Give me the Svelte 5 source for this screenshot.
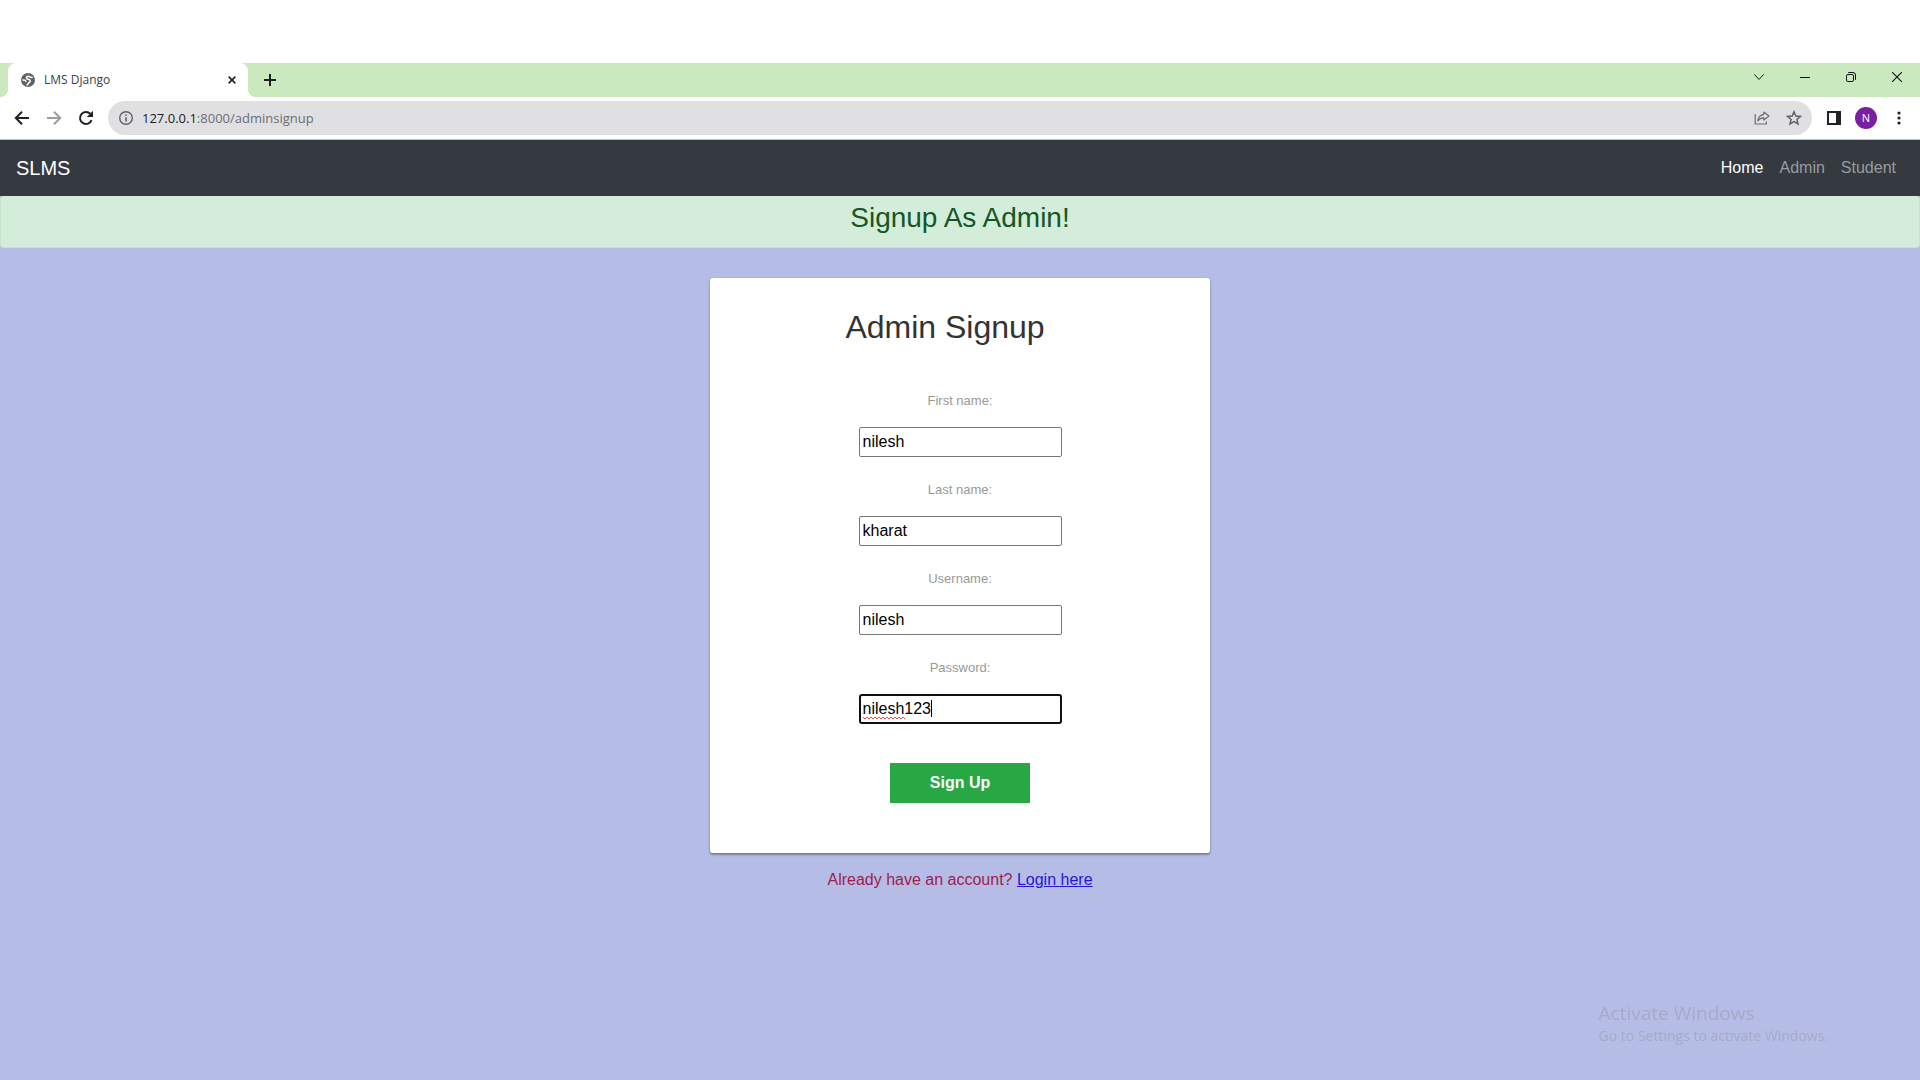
<script>
  let fields = $state([
    { id: 'first-name', label: 'First name:', value: 'nilesh' },
    { id: 'last-name', label: 'Last name:', value: 'kharat' },
    { id: 'username', label: 'Username:', value: 'nilesh' },
    { id: 'password', label: 'Password:', value: 'nilesh123', active: true }
  ]);
  let url = $state('127.0.0.1:8000/adminsignup');
  let host = $derived(url.split(':')[0]);
  let rest = $derived(url.slice(host.length));
</script>

<div class="screen">
  <header class="browser">
    <div class="tabstrip">
      <div class="tab">
        <svg class="favicon" width="14" height="14" viewBox="0 0 14 14" aria-hidden="true">
          <circle cx="7" cy="7" r="7" fill="#5f6368" />
          <path d="M11.6 3.9 C10.6 5.2 9.6 4.2 8.4 3.6 C6.8 2.8 5.2 3.6 5.6 5.2 C6 6.6 8.8 6 9.2 7.6 C9.6 9.2 8.2 9.2 7.6 10 C7 11 6.8 12 5.6 12.2" fill="none" stroke="#fff" stroke-width="1.5" />
          <path d="M1.4 7.2 C3 6.6 4.6 7.2 5.2 8.8" fill="none" stroke="#fff" stroke-width="1.5" />
        </svg>
        <span class="title">LMS Django</span>
        <button class="icon close" aria-label="Close tab">
          <svg width="8" height="8" viewBox="0 0 8 8"><path d="M.6 .6 L7.4 7.4 M7.4 .6 L.6 7.4" stroke="#202124" stroke-width="1.6" /></svg>
        </button>
      </div>
      <button class="icon newtab" aria-label="New tab">
        <svg width="12" height="12" viewBox="0 0 12 12"><path d="M6 0 V12 M0 6 H12" stroke="#202124" stroke-width="2" /></svg>
      </button>
      <div class="window-controls">
        <button class="icon" aria-label="Search tabs">
          <svg width="10" height="10" viewBox="0 0 10 10"><path d="M.3 2.3 L5 7.5 L9.7 2.3" fill="none" stroke="#202124" /></svg>
        </button>
        <button class="icon" aria-label="Minimize">
          <svg width="10" height="10" viewBox="0 0 10 10"><path d="M0 5.5 H10" stroke="#111" /></svg>
        </button>
        <button class="icon" aria-label="Restore">
          <svg width="10" height="10" viewBox="0 0 10 10" fill="none" stroke="#111"><rect x=".5" y="2.5" width="7" height="7" rx="1.4" /><path d="M2.2 .5 H7 Q9.5 .5 9.5 3 V7.8" /></svg>
        </button>
        <button class="icon" aria-label="Close">
          <svg width="10" height="10" viewBox="0 0 10 10"><path d="M0 0 L10 10 M10 0 L0 10" stroke="#111" stroke-width="1.1" /></svg>
        </button>
      </div>
    </div>

    <div class="toolbar">
      <button class="icon tool" aria-label="Back">
        <svg width="16" height="16" viewBox="0 0 16 16"><path d="M15 8 H2.5 M8 1.8 L1.8 8 L8 14.2" fill="none" stroke="#202124" stroke-width="2" /></svg>
      </button>
      <button class="icon tool" aria-label="Forward">
        <svg width="16" height="16" viewBox="0 0 16 16"><path d="M1 8 H13.5 M8 1.8 L14.2 8 L8 14.2" fill="none" stroke="#9b9da0" stroke-width="2" /></svg>
      </button>
      <button class="icon tool" aria-label="Reload">
        <svg width="16" height="16" viewBox="0 0 16 16"><path d="M13.6 10.2 A6 6 0 1 1 12.3 3.8" fill="none" stroke="#202124" stroke-width="2" /><path d="M15 .8 V7 H8.8 Z" fill="#202124" /></svg>
      </button>
      <div class="address">
        <svg width="14" height="14" viewBox="0 0 14 14" aria-hidden="true"><circle cx="7" cy="7" r="6.3" fill="none" stroke="#5f6368" stroke-width="1.4" /><path d="M7 6.2 V10.6 M7 3.4 V5" stroke="#5f6368" stroke-width="1.6" /></svg>
        <a class="url" href="#top"><b>{host}</b>{rest}</a>
        <button class="icon" aria-label="Share">
          <svg width="16" height="16" viewBox="0 0 16 16" fill="none" stroke="#6b6e72" stroke-width="1.2"><path d="M1.2 4 V14 H12.4 V11.6" /><path d="M9.8 2 L15 6 L9.8 10 V7.8 C7 7.8 5.2 8.8 3.8 10.8 C4.2 7.4 6.2 4.8 9.8 4.3 Z" stroke-linejoin="round" /></svg>
        </button>
        <button class="icon" aria-label="Bookmark">
          <svg width="16" height="16" viewBox="0 0 16 16"><path d="M8 1.8 L9.8 6 L14.4 6.4 L10.9 9.4 L12 13.9 L8 11.5 L4 13.9 L5.1 9.4 L1.6 6.4 L6.2 6 Z" fill="none" stroke="#5f6368" stroke-width="1.5" /></svg>
        </button>
      </div>
      <button class="icon side" aria-label="Side panel">
        <svg width="14" height="14" viewBox="0 0 14 14"><path d="M0 0 H14 V14 H0 Z M2 2 V12 H9 V2 Z" fill="#202124" fill-rule="evenodd" /></svg>
      </button>
      <button class="avatar" aria-label="Profile">N</button>
      <button class="icon menu" aria-label="Menu">
        <svg width="4" height="14" viewBox="0 0 4 14" fill="#202124"><circle cx="2" cy="2" r="1.6" /><circle cx="2" cy="7" r="1.6" /><circle cx="2" cy="12" r="1.6" /></svg>
      </button>
    </div>
  </header>

  <nav class="navbar">
    <a class="brand" href="#top">SLMS</a>
    <div class="links">
      <a class="current" href="#home">Home</a>
      <a href="#admin">Admin</a>
      <a href="#student">Student</a>
    </div>
  </nav>

  <main>
    <div class="alert"><h3>Signup As Admin!</h3></div>

    <form class="card" onsubmit={(e) => e.preventDefault()}>
      <h2>Admin Signup</h2>
      {#each fields as field (field.id)}
        <div class="field">
          <label for={field.id}>{field.label}</label>
          <div class="control">
            <input id={field.id} type="text" class:active={field.active} bind:value={field.value} spellcheck="false" autocomplete="off" />
            {#if field.active}
              <svg class="squiggle" width="42" height="4" viewBox="0 0 42 4" aria-hidden="true">
                <path d="M0 1 L2 3 L4 1 L6 3 L8 1 L10 3 L12 1 L14 3 L16 1 L18 3 L20 1 L22 3 L24 1 L26 3 L28 1 L30 3 L32 1 L34 3 L36 1 L38 3 L40 1 L42 3" fill="none" stroke="#e8504a" />
              </svg>
              <span class="caret"></span>
            {/if}
          </div>
        </div>
      {/each}
      <button class="submit" type="submit">Sign Up</button>
    </form>

    <p class="login">Already have an account? <a href="#login">Login here</a></p>
  </main>

  <aside class="watermark">
    <div class="large">Activate Windows</div>
    <div>Go to Settings to activate Windows.</div>
  </aside>
</div>

<style>
  :global(body) {
    margin: 0;
    background: #b5bde7;
  }
  .screen {
    min-height: 100vh;
    font-family: "Liberation Sans", Arial, sans-serif;
    font-size: 16px;
    line-height: 24px;
  }
  .screen, .screen * {
    box-sizing: border-box;
  }
  button {
    border: 0;
    padding: 0;
    background: none;
    font-family: inherit;
  }
  svg {
    display: block;
    flex: none;
  }
  .icon {
    display: flex;
    align-items: center;
    justify-content: center;
  }

  .browser {
    padding-top: 63px;
    background: #fff;
    border-bottom: 1px solid #c4c5c7;
    font-family: "Open Sans", "Noto Sans", sans-serif;
  }
  .tabstrip {
    display: flex;
    height: 34px;
    padding-left: 8px;
    background: #cae9be;
  }
  .tab {
    position: relative;
    display: flex;
    align-items: center;
    width: 240px;
    padding: 0 12px 0 13px;
    border-radius: 8px 8px 0 0;
    background: #fff;
  }
  .tab::before,
  .tab::after {
    content: "";
    position: absolute;
    bottom: 0;
    width: 8px;
    height: 8px;
  }
  .tab::before {
    left: -8px;
    background: radial-gradient(circle at 0 0, #cae9be 8px, #fff 8px);
  }
  .tab::after {
    right: -8px;
    background: radial-gradient(circle at 100% 0, #cae9be 8px, #fff 8px);
  }
  .title {
    flex: 1;
    margin-left: 9px;
    color: #3c4043;
    font-size: 12px;
  }
  .newtab {
    width: 28px;
    margin-left: 8px;
  }
  .window-controls {
    display: flex;
    height: 28px;
    margin-left: auto;
  }
  .window-controls .icon {
    width: 46px;
  }

  .toolbar {
    display: flex;
    align-items: center;
    padding: 4px 7px 4px 8px;
  }
  .tool {
    width: 28px;
    height: 28px;
    margin-right: 4px;
  }
  .address {
    display: flex;
    flex: 1;
    align-items: center;
    gap: 16px;
    height: 34px;
    margin-left: 4px;
    padding: 0 10px 0 11px;
    border-radius: 17px;
    background: #e0e0e2;
  }
  .url {
    flex: 1;
    margin-left: -7px;
    color: #6b6e72;
    font-size: 13px;
    text-decoration: none;
  }
  .url b {
    color: #202124;
    font-weight: 400;
  }
  .side {
    margin-left: 15px;
  }
  .avatar {
    width: 22px;
    height: 22px;
    margin-left: 14px;
    border-radius: 50%;
    background: #7b1fa2;
    color: #fff;
    font-size: 11px;
    line-height: 22px;
    text-align: center;
  }
  .menu {
    width: 28px;
    margin-left: 8px;
  }

  .navbar {
    display: flex;
    align-items: center;
    justify-content: space-between;
    height: 56px;
    padding: 0 16px;
    background: #343a40;
  }
  .navbar a {
    color: #999c9f;
    text-decoration: none;
  }
  .navbar .brand {
    color: #fff;
    font-size: 20px;
  }
  .links {
    display: flex;
    gap: 16px;
    padding-right: 8px;
  }
  .links .current {
    color: #fff;
  }

  .alert {
    height: 52px;
    padding-top: 5px;
    border: 1px solid #c3e6cb;
    border-top: 0;
    border-radius: 4px;
    background: #d4edda;
    color: #155724;
    text-align: center;
  }
  .alert h3 {
    margin: 0;
    font-size: 28px;
    font-weight: 400;
    line-height: 34px;
  }
  .card {
    display: flex;
    flex-direction: column;
    align-items: center;
    width: 500px;
    max-width: 100%;
    margin: 30px auto 0;
    padding: 29px 80px 50px;
    border-radius: 3px;
    background: #fff;
    box-shadow: 0 1px 3px rgba(0, 0, 0, 0.2), 0 2px 2px rgba(0, 0, 0, 0.24);
  }
  h2 {
    margin: 0 0 44px;
    padding-right: 30px;
    color: #333;
    font-size: 32px;
    font-weight: 400;
    line-height: 40px;
  }
  .field {
    display: flex;
    flex-direction: column;
    align-items: center;
    gap: 16px;
    margin-bottom: 23px;
  }
  label {
    color: #999;
    font-size: 13px;
    line-height: 20px;
  }
  .control {
    position: relative;
  }
  input {
    display: block;
    width: 203px;
    height: 30px;
    padding: 0 3px;
    border: 1px solid #767676;
    border-radius: 2px;
    outline: 0;
    background: #fff;
    color: #000;
    font: 16px "Liberation Sans", Arial, sans-serif;
  }
  input.active {
    padding: 0 2px;
    border: 2px solid #101010;
    border-radius: 3px;
  }
  .squiggle {
    position: absolute;
    left: 4px;
    top: 22px;
  }
  .caret {
    position: absolute;
    left: 72px;
    top: 6px;
    width: 1px;
    height: 17px;
    background: #000;
  }
  .submit {
    width: 140px;
    height: 40px;
    margin-top: 16px;
    background: #28a745;
    color: #fff;
    font-size: 16px;
    font-weight: 700;
  }
  .login {
    margin: 15px 0 0;
    color: #a01c4c;
    text-align: center;
  }
  .login a {
    color: #2a14dc;
  }

  .watermark {
    position: fixed;
    right: 92px;
    bottom: 33px;
    color: #a5aac6;
    font-family: "Open Sans", "Noto Sans", sans-serif;
    font-size: 14px;
    line-height: 22px;
  }
  .large {
    font-size: 19px;
    line-height: 24px;
  }
</style>
